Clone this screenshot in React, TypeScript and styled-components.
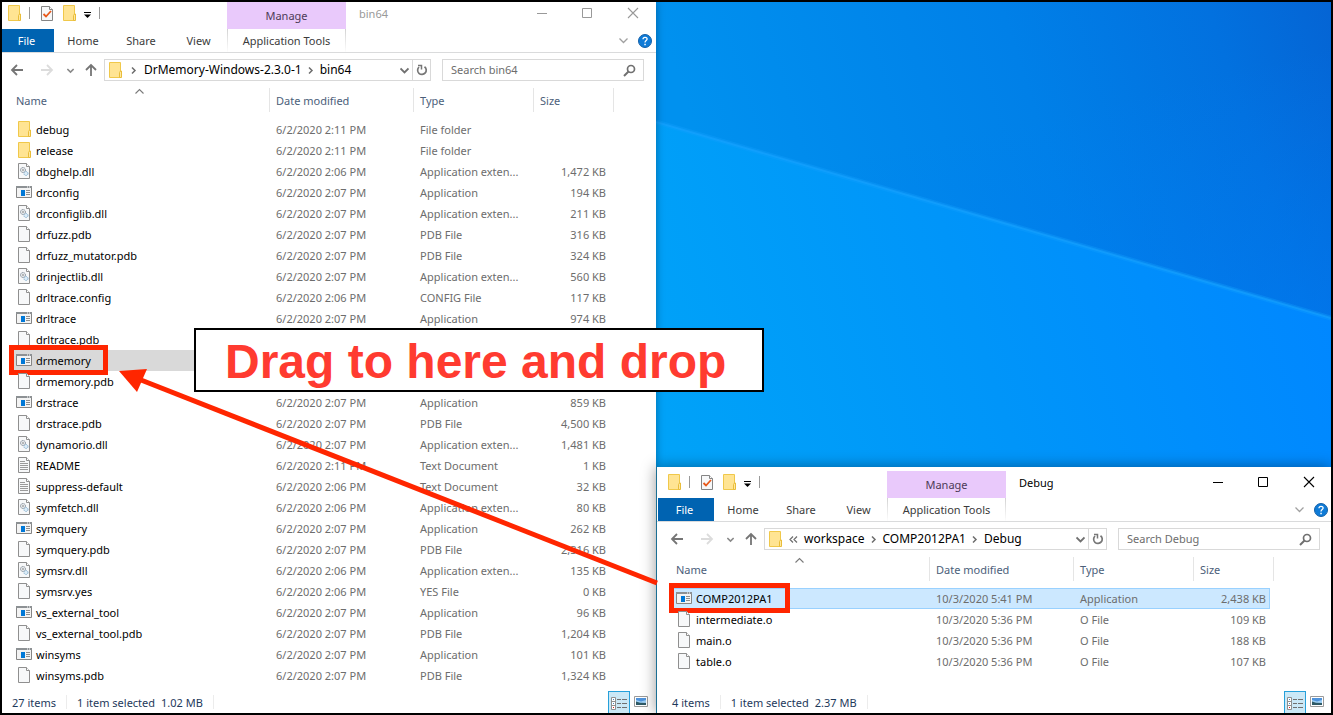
import React from "react";
import styled, { createGlobalStyle, css } from "styled-components";

const GlobalStyle = createGlobalStyle`
  *, *::before, *::after { box-sizing: border-box; }
  body {
    margin: 0;
    font-family: "Noto Sans", "Open Sans", sans-serif;
    font-size: 11px;
    line-height: 16px;
    color: #000;
  }
  button, input { font: inherit; }
  svg { display: block; flex: none; }
`;

/* ---------- desktop ---------- */

const Desktop = styled.main`
  position: relative;
  display: flex;
  min-height: 100vh;
  border: 2px solid #000;
  overflow: hidden;
`;

const RightSide = styled.div`
  display: flex;
  flex-direction: column;
  flex: 675 1 0;
  min-width: 0;
`;

const WallpaperArea = styled.div`
  position: relative;
  flex: 1;
  background: #0090f4;
  & > svg {
    position: absolute;
    inset: 0;
    width: 100%;
    height: 100%;
  }
`;

const Window = styled.section<{ $front?: boolean }>`
  position: relative;
  display: flex;
  flex-direction: column;
  min-width: 0;
  background: #fff;
  z-index: 1;
  box-shadow: 0 0 8px rgba(0, 0, 0, 0.35);
  ${(p) =>
    p.$front
      ? css`
          z-index: 2;
          border-left: 1px solid #1b6f94;
          box-shadow: 0 0 14px rgba(0, 0, 0, 0.4);
        `
      : css`
          flex: 654 1 0;
        `}
`;

/* ---------- ribbon ---------- */

const Ribbon = styled.header<{ $inset: number }>`
  display: grid;
  grid-template-columns: ${(p) => 225 + p.$inset}px 119px 1fr;
  grid-template-rows: 27px 23px;
  padding-top: ${(p) => (p.$inset ? 4 : 0)}px;
  border-bottom: 1px solid #dadbdc;
`;

const QuickAccess = styled.div<{ $inset: number }>`
  display: flex;
  gap: 6px;
  padding: 3px 0 0 ${(p) => 4 + p.$inset}px;
`;

const BareButton = styled.button`
  display: flex;
  align-items: center;
  justify-content: center;
  padding: 0;
  border: 0;
  background: none;
  color: inherit;
`;

const QuickButton = styled(BareButton)`
  height: 16px;
`;

const QuickDivider = styled.span`
  width: 1px;
  height: 12px;
  margin: 2px 3px 0 1px;
  background: #9a9a9a;
`;

const ContextTitle = styled.div`
  padding-top: 6px;
  background: #e9c9fb;
  color: #4d3b57;
  text-align: center;
`;

const TitleBar = styled.div<{ $active?: boolean }>`
  display: flex;
  justify-content: space-between;
  padding-left: 13px;
  color: ${(p) => (p.$active ? "#000" : "#999")};
`;

const TitleText = styled.h1`
  margin: 4px 0 0;
  font-size: 11px;
  font-weight: 400;
  line-height: 16px;
`;

const WindowButtons = styled.div<{ $trim: number }>`
  display: flex;
  margin-right: -${(p) => p.$trim}px;
`;

const WindowButton = styled(BareButton)`
  width: 46px;
  height: 22px;
`;

const TabRow = styled.nav<{ $inset: number }>`
  display: grid;
  grid-template-columns: ${(p) => (p.$inset ? 56 : 52)}px 58px 58px 57px;
  padding-left: ${(p) => (p.$inset ? 1 : 0)}px;
`;

const Tab = styled(BareButton)<{ $file?: boolean }>`
  color: #3b3b3b;
  ${(p) =>
    p.$file &&
    css`
      background: #0063b1;
      color: #fff;
      padding-right: 3px;
    `}
`;

const ContextTab = styled(BareButton)`
  align-self: start;
  height: 23px;
  border-style: solid;
  border-width: 0 1px;
  border-image: linear-gradient(#d0d0d0, #fff) 1;
  color: #3b3b3b;
`;

const RibbonEnd = styled.div<{ $trim: number }>`
  display: flex;
  align-items: center;
  justify-content: flex-end;
  gap: 10px;
  padding-right: ${(p) => 4 - p.$trim}px;
`;

const HelpButton = styled(BareButton)`
  width: 14px;
  height: 14px;
`;

/* ---------- navigation ---------- */

const NavBar = styled.div<{ $inset: number; $trim: number }>`
  display: flex;
  align-items: center;
  padding: 6px ${(p) => 12 - p.$trim}px 7px ${(p) => 7 + p.$inset}px;
`;

const NavButton = styled(BareButton)`
  width: 16px;
  height: 16px;
`;

const NavArrows = styled.div`
  display: flex;
  align-items: center;
  gap: 14px;
`;

const NavUp = styled.div`
  display: flex;
  align-items: center;
  gap: 8px;
  margin: 0 5px 0 11px;
`;

const RecentButton = styled(BareButton)`
  width: 9px;
  height: 16px;
`;

const AddressBar = styled.div`
  display: flex;
  flex: 1;
  align-items: center;
  height: 22px;
  min-width: 0;
  border: 1px solid #d9d9d9;
  padding-left: 2px;
`;

const Crumbs = styled.ol`
  display: flex;
  flex: 1;
  min-width: 0;
  margin: 0;
  padding: 0;
  list-style: none;
  font-size: 12px;
  white-space: nowrap;
`;

const Crumb = styled.li`
  display: flex;
  align-items: center;
`;

const CrumbGap = styled.span<{ $first?: boolean }>`
  display: flex;
  justify-content: center;
  width: ${(p) => (p.$first ? 21 : 18)}px;
`;

const AddressDrop = styled(BareButton)`
  width: 16px;
  height: 20px;
`;

const RefreshButton = styled(BareButton)`
  width: 18px;
  height: 20px;
  border-left: 1px solid #d9d9d9;
`;

const SearchBox = styled.label`
  display: flex;
  align-items: center;
  width: 202px;
  height: 22px;
  margin-left: 11px;
  padding: 0 7px 0 8px;
  border: 1px solid #d9d9d9;
`;

const SearchInput = styled.input`
  flex: 1;
  min-width: 0;
  padding: 0;
  border: 0;
  outline: 0;
  background: none;
  &::placeholder {
    color: #6d6d6d;
    opacity: 1;
  }
`;

/* ---------- file list ---------- */

const ListArea = styled.div<{ $inset: number }>`
  flex: 1;
  padding: 0 0 ${(p) => (p.$inset ? 19 : 5)}px ${(p) => 8 + p.$inset}px;
`;

const FileTable = styled.table`
  table-layout: fixed;
  width: 604px;
  border-collapse: separate;
  border-spacing: 0;
  white-space: nowrap;
`;

const Col = styled.col<{ $w: number }>`
  width: ${(p) => p.$w}px;
`;

const HeadCell = styled.th`
  padding: 0 0 7px;
  text-align: left;
  font-weight: 400;
  color: #4c607a;
`;

const HeadLabel = styled.div`
  position: relative;
  display: flex;
  align-items: center;
  height: 24px;
  padding: 2px 0 0 6px;
  border-right: 1px solid #e5e5e5;
`;

const SortMark = styled.span`
  position: absolute;
  top: 0;
  left: 50%;
  margin-left: -5px;
`;

const FileRow = styled.tr<{ $selected?: "active" | "inactive" }>`
  height: 21px;
  color: #6d6d6d;
  ${(p) =>
    p.$selected === "active" &&
    css`
      & > td:not(:last-child) {
        background: #cce8ff;
        box-shadow: inset 0 1px #99d1ff, inset 0 -1px #99d1ff;
      }
      & > td:nth-child(4) {
        box-shadow: inset 0 1px #99d1ff, inset -1px -1px #99d1ff;
      }
    `}
  ${(p) =>
    p.$selected === "inactive" &&
    css`
      & > td:not(:last-child) {
        background: #d9d9d9;
      }
    `}
`;

const Cell = styled.td<{ $right?: boolean }>`
  padding: 0 4px 0 6px;
  text-align: ${(p) => (p.$right ? "right" : "left")};
`;

const NameLabel = styled.span`
  position: relative;
  display: flex;
  align-items: center;
  gap: 4px;
  width: fit-content;
  height: 20px;
  margin-bottom: 1px;
  color: #000;
`;

const FileName = styled.span`
  padding-top: 2px;
`;

const Marker = styled.span`
  position: absolute;
  inset: -5px -17px -5px -7px;
  border: 5px solid #ff2600;
`;

/* ---------- status bar ---------- */

const StatusBar = styled.footer<{ $inset: number; $trim: number }>`
  display: flex;
  align-items: center;
  height: 22px;
  padding: 0 ${(p) => 4 - p.$trim}px 0 ${(p) => 10 + p.$inset}px;
  color: #1e395b;
`;

const StatusText = styled.span`
  display: flex;
  gap: 6px;
  padding-top: 2px;
`;

const StatusDivider = styled.span`
  width: 1px;
  height: 14px;
  margin: 0 10px;
  background: #ececec;
`;

const ViewButtons = styled.div`
  display: flex;
  margin-left: auto;
`;

const ViewButton = styled(BareButton)<{ $on?: boolean }>`
  width: 22px;
  height: 22px;
  ${(p) =>
    p.$on &&
    css`
      background: #cbe8f6;
      border: 1px solid #26a0da;
      border-bottom: 0;
    `}
`;

/* ---------- annotation ---------- */

const ArrowLayer = styled.svg`
  position: absolute;
  top: 0;
  left: 0;
  z-index: 3;
  pointer-events: none;
`;

const Callout = styled.p`
  position: absolute;
  top: 326px;
  left: 192px;
  z-index: 4;
  width: 570px;
  margin: 0;
  padding: 6px 0 2px 29px;
  border: 2px solid #000;
  background: #fff;
  color: #ff3b30;
  font-family: "Liberation Sans", Arial, sans-serif;
  font-size: 48px;
  font-weight: 700;
  line-height: 52px;
  white-space: nowrap;
`;

/* ---------- icons ---------- */

const FolderIcon = () => (
  <svg width="16" height="16" viewBox="0 0 16 16" aria-hidden="true">
    <path d="M2.5.5h11v15h-11z" fill="#ffe493" stroke="#f0c84a" />
    <path d="M12.500 10.500l1-1.500h1v6.500h-2z" fill="#ffe89f" stroke="#e9bd3a" />
  </svg>
);

const Sheet = () => (
  <>
    <path d="M2.5.5h8l3 3v12h-11z" fill="#f7f8f9" stroke="#8f8f8f" />
    <path d="M10.5.5v3h3" fill="#fff" stroke="#8f8f8f" />
  </>
);

const PageIcon = () => (
  <svg width="16" height="16" viewBox="0 0 16 16" aria-hidden="true">
    <Sheet />
  </svg>
);

const TextIcon = () => (
  <svg width="16" height="16" viewBox="0 0 16 16" aria-hidden="true">
    <Sheet />
    <path d="M4 4.5h5M4 6.5h8M4 8.5h8M4 10.5h8M4 12.5h8" stroke="#9a9a9a" />
  </svg>
);

const LibraryIcon = () => (
  <svg width="16" height="16" viewBox="0 0 16 16" aria-hidden="true">
    <Sheet />
    <circle cx="7" cy="7" r="2.5" fill="#e6e9ec" stroke="#87909a" strokeDasharray="1.4 .6" />
    <circle cx="7" cy="7" r=".8" fill="#777" />
    <circle cx="10" cy="10.5" r="2" fill="#dcecf7" stroke="#86b0cf" strokeDasharray="1.4 .6" />
  </svg>
);

const AppIcon = () => (
  <svg width="16" height="16" viewBox="0 0 16 16" aria-hidden="true">
    <path d="M.5 2.5h15v11H.5z" fill="#f3f3f3" stroke="#858585" />
    <path d="M0 2h16v2H0z" fill="#8d9194" />
    <path d="M11 3h1M13 3h1" stroke="#fff" />
    <path d="M5 6h4v6H5z" fill="#0078d7" />
    <path d="M10 6.5h4M10 8.5h4M10 10.5h4" stroke="#8f8f8f" />
  </svg>
);

const CheckPageIcon = () => (
  <svg width="16" height="16" viewBox="0 0 16 16" aria-hidden="true">
    <path d="M2.5 1.5h8l3 3v11h-11z" fill="#f7f8f9" stroke="#858585" />
    <path d="M10.5 1.5v3h3" fill="#fff" stroke="#858585" />
    <path d="M4.5 9l2.5 2.5L12 6" fill="none" stroke="#e8591a" strokeWidth="1.8" />
  </svg>
);

const CustomizeIcon = () => (
  <svg width="9" height="16" viewBox="0 0 9 16" aria-hidden="true">
    <path d="M1 7.5h7" stroke="#000" />
    <path d="M1 9.5h7L4.500 13z" fill="#000" />
  </svg>
);

const MinimizeIcon = () => (
  <svg width="12" height="12" viewBox="0 0 12 12" aria-hidden="true">
    <path d="M2 6.5h10" stroke="currentColor" />
  </svg>
);

const MaximizeIcon = () => (
  <svg width="12" height="12" viewBox="0 0 12 12" aria-hidden="true">
    <path d="M1.5 1.5h9v9h-9z" fill="none" stroke="currentColor" />
  </svg>
);

const CloseIcon = () => (
  <svg width="12" height="12" viewBox="0 0 12 12" aria-hidden="true">
    <path d="M1 1l10 10M11 1L1 11" stroke="currentColor" strokeWidth="1.1" />
  </svg>
);

const Chevron = ({ size = 9, color = "#8a8a8a", weight = 1.5, up = false }) => (
  <svg width={size} height={size} viewBox="0 0 9 9" fill="none" aria-hidden="true">
    <path d={up ? "M.5 5.5l4-4 4 4" : "M.5 2.5l4 4 4-4"} stroke={color} strokeWidth={weight} />
  </svg>
);

const RightChevron = ({ twice = false }) => (
  <svg width="9" height="16" viewBox="0 0 9 16" fill="none" aria-hidden="true">
    {twice ? (
      <path d="M4 5.5L1 8.5l3 3M8 5.5l-3 3 3 3" stroke="#6d6d6d" strokeWidth="1.2" />
    ) : (
      <path d="M3 5.5l3 3-3 3" stroke="#6d6d6d" strokeWidth="1.5" />
    )}
  </svg>
);

const ArrowIcon = ({ kind }: { kind: "back" | "forward" | "up" }) => {
  const shape = {
    back: "M14 8H3M8 3L3 8l5 5",
    forward: "M2 8h11M8 3l5 5-5 5",
    up: "M8 14V3M3 8l5-5 5 5",
  }[kind];
  return (
    <svg width="16" height="16" viewBox="0 0 16 16" fill="none" aria-hidden="true">
      <path d={shape} stroke={kind === "forward" ? "#dcdcdc" : "#757575"} strokeWidth="1.8" />
    </svg>
  );
};

const RefreshIcon = () => (
  <svg width="12" height="12" viewBox="0 0 12 12" fill="none" aria-hidden="true">
    <path d="M8.500 2.700A4.300 4.300 0 1 1 3 3" stroke="#777" strokeWidth="1.700" />
    <path d="M2 1.500h3.500v4" stroke="#777" strokeWidth="1.500" />
  </svg>
);

const SearchIcon = () => (
  <svg width="13" height="13" viewBox="0 0 13 13" fill="none" aria-hidden="true">
    <circle cx="8" cy="5" r="3.500" stroke="#707070" strokeWidth="1.700" />
    <path d="M5.500 7.500L1 12" stroke="#707070" strokeWidth="2" />
  </svg>
);

const HelpIcon = () => (
  <svg width="14" height="14" viewBox="0 0 14 14" fill="none" aria-hidden="true">
    <circle cx="7" cy="7" r="6.500" fill="#0f7bd7" stroke="#1460a8" />
    <path d="M5 5.300c0-2.600 4.100-2.500 4.100-.2C9.100 6.600 7 6.600 7 8.500" stroke="#fff" strokeWidth="1.300" />
    <path d="M6.300 9.800h1.500v1.500H6.300z" fill="#fff" />
  </svg>
);

const DetailsIcon = () => (
  <svg width="18" height="14" viewBox="0 0 18 14" fill="none" aria-hidden="true">
    <path d="M1.500 1.500h4v12h-4zM1.500 5.500h4M1.500 9.500h4" fill="#fff" stroke="#8f8f8f" />
    <path d="M3 3.500h1M3 7.500h1" stroke="#4a8ac0" />
    <path d="M3 11.500h1" stroke="#e02020" />
    <path
      d="M7 3.500h4M12 3.500h5M7 7.500h4M12 7.500h5M7 11.500h4M12 11.500h5"
      stroke="#707070"
    />
  </svg>
);

const PictureIcon = () => (
  <svg width="14" height="12" viewBox="0 0 14 12" fill="none" aria-hidden="true">
    <path d="M.5.5h13v10H.5z" fill="#fff" stroke="#9a9a9a" />
    <path d="M2 2h10v7H2z" fill="#9fd0f5" />
    <path d="M2 2h10v2L7 5.500 2 4z" fill="#4f93dc" />
    <path d="M2 5.500l4 1.200 6 .3v2H2z" fill="#2f5a66" />
  </svg>
);

const Wallpaper = () => (
  <svg viewBox="0 0 675 465" preserveAspectRatio="none" aria-hidden="true">
    <defs>
      <linearGradient id="sky" gradientUnits="userSpaceOnUse" x1="60" y1="200" x2="690" y2="0">
        <stop offset="0" stopColor="#0091ef" />
        <stop offset=".5" stopColor="#0080e8" />
        <stop offset=".8" stopColor="#0271df" />
        <stop offset="1" stopColor="#0563d3" />
      </linearGradient>
      <linearGradient id="glow" gradientUnits="userSpaceOnUse" x1="0" y1="465" x2="660" y2="250">
        <stop offset="0" stopColor="#00a3f8" />
        <stop offset=".5" stopColor="#0095f9" />
        <stop offset="1" stopColor="#0087ff" />
      </linearGradient>
      <linearGradient id="lift" gradientUnits="userSpaceOnUse" x1="600" y1="60" x2="660" y2="320">
        <stop offset="0" stopColor="#007cf6" stopOpacity="0" />
        <stop offset="1" stopColor="#007cf6" stopOpacity=".8" />
      </linearGradient>
    </defs>
    <path d="M0 0h675v465H0z" fill="url(#sky)" />
    <path d="M0 0h675v316L0 120z" fill="url(#lift)" opacity=".6" />
    <path d="M0 120l675 196v149H0z" fill="url(#glow)" />
    <path d="M0 120l675 196" stroke="#12a0ff" strokeWidth="5" opacity=".35" />
    <path d="M0 120l675 196" stroke="#17a2ff" strokeWidth="2" opacity=".6" />
  </svg>
);

/* ---------- data ---------- */

type Kind = "folder" | "dll" | "app" | "page" | "text";
type FileEntry = [kind: Kind, name: string, date?: string, type?: string, size?: string];

const icons: Record<Kind, () => React.JSX.Element> = {
  folder: FolderIcon,
  dll: LibraryIcon,
  app: AppIcon,
  page: PageIcon,
  text: TextIcon,
};

const memoryFiles: FileEntry[] = [
  ["folder", "debug", "6/2/2020 2:11 PM", "File folder"],
  ["folder", "release", "6/2/2020 2:11 PM", "File folder"],
  ["dll", "dbghelp.dll", "6/2/2020 2:06 PM", "Application exten...", "1,472 KB"],
  ["app", "drconfig", "6/2/2020 2:07 PM", "Application", "194 KB"],
  ["dll", "drconfiglib.dll", "6/2/2020 2:07 PM", "Application exten...", "211 KB"],
  ["page", "drfuzz.pdb", "6/2/2020 2:07 PM", "PDB File", "316 KB"],
  ["page", "drfuzz_mutator.pdb", "6/2/2020 2:07 PM", "PDB File", "324 KB"],
  ["dll", "drinjectlib.dll", "6/2/2020 2:07 PM", "Application exten...", "560 KB"],
  ["page", "drltrace.config", "6/2/2020 2:06 PM", "CONFIG File", "117 KB"],
  ["app", "drltrace", "6/2/2020 2:07 PM", "Application", "974 KB"],
  ["page", "drltrace.pdb"],
  ["app", "drmemory"],
  ["page", "drmemory.pdb"],
  ["app", "drstrace", "6/2/2020 2:07 PM", "Application", "859 KB"],
  ["page", "drstrace.pdb", "6/2/2020 2:07 PM", "PDB File", "4,500 KB"],
  ["dll", "dynamorio.dll", "6/2/2020 2:07 PM", "Application exten...", "1,481 KB"],
  ["text", "README", "6/2/2020 2:11 PM", "Text Document", "1 KB"],
  ["text", "suppress-default", "6/2/2020 2:06 PM", "Text Document", "32 KB"],
  ["dll", "symfetch.dll", "6/2/2020 2:06 PM", "Application exten...", "80 KB"],
  ["app", "symquery", "6/2/2020 2:07 PM", "Application", "262 KB"],
  ["page", "symquery.pdb", "6/2/2020 2:07 PM", "PDB File", "2,316 KB"],
  ["dll", "symsrv.dll", "6/2/2020 2:06 PM", "Application exten...", "135 KB"],
  ["page", "symsrv.yes", "6/2/2020 2:06 PM", "YES File", "0 KB"],
  ["app", "vs_external_tool", "6/2/2020 2:07 PM", "Application", "96 KB"],
  ["page", "vs_external_tool.pdb", "6/2/2020 2:07 PM", "PDB File", "1,204 KB"],
  ["app", "winsyms", "6/2/2020 2:07 PM", "Application", "101 KB"],
  ["page", "winsyms.pdb", "6/2/2020 2:07 PM", "PDB File", "1,324 KB"],
];

const debugFiles: FileEntry[] = [
  ["app", "COMP2012PA1", "10/3/2020 5:41 PM", "Application", "2,438 KB"],
  ["page", "intermediate.o", "10/3/2020 5:36 PM", "O File", "109 KB"],
  ["page", "main.o", "10/3/2020 5:36 PM", "O File", "188 KB"],
  ["page", "table.o", "10/3/2020 5:36 PM", "O File", "107 KB"],
];

/* ---------- explorer window ---------- */

interface ExplorerProps {
  title: string;
  path: string[];
  collapsed?: boolean;
  front?: boolean;
  files: FileEntry[];
  selected: string;
  count: string;
  size: string;
}

const Explorer = ({ title, path, collapsed, front, files, selected, count, size }: ExplorerProps) => {
  const inset = front ? 5 : 0;
  const trim = front ? 1 : 0;
  return (
    <Window $front={front} aria-label={title}>
      <Ribbon $inset={inset}>
        <QuickAccess $inset={inset}>
          <FolderIcon />
          <QuickDivider />
          <QuickButton aria-label="Properties"><CheckPageIcon /></QuickButton>
          <QuickButton aria-label="New folder"><FolderIcon /></QuickButton>
          <QuickButton aria-label="Customize toolbar"><CustomizeIcon /></QuickButton>
          <QuickDivider />
        </QuickAccess>
        <ContextTitle>Manage</ContextTitle>
        <TitleBar $active={front}>
          <TitleText>{title}</TitleText>
          <WindowButtons $trim={trim}>
            <WindowButton aria-label="Minimize"><MinimizeIcon /></WindowButton>
            <WindowButton aria-label="Maximize"><MaximizeIcon /></WindowButton>
            <WindowButton aria-label="Close"><CloseIcon /></WindowButton>
          </WindowButtons>
        </TitleBar>
        <TabRow $inset={inset}>
          <Tab $file>File</Tab>
          <Tab>Home</Tab>
          <Tab>Share</Tab>
          <Tab>View</Tab>
        </TabRow>
        <ContextTab>Application Tools</ContextTab>
        <RibbonEnd $trim={trim}>
          <BareButton aria-label="Expand ribbon"><Chevron color="#a0a0a0" weight={1.3} /></BareButton>
          <HelpButton aria-label="Help"><HelpIcon /></HelpButton>
        </RibbonEnd>
      </Ribbon>

      <NavBar $inset={inset} $trim={trim}>
        <NavArrows>
          <NavButton aria-label="Back"><ArrowIcon kind="back" /></NavButton>
          <NavButton aria-label="Forward"><ArrowIcon kind="forward" /></NavButton>
        </NavArrows>
        <NavUp>
          <RecentButton aria-label="Recent locations"><Chevron size={7} weight={2} /></RecentButton>
          <NavButton aria-label="Up"><ArrowIcon kind="up" /></NavButton>
        </NavUp>
        <AddressBar>
          <FolderIcon />
          <Crumbs>
            {path.map((part, i) => (
              <Crumb key={part}>
                <CrumbGap $first={i === 0}><RightChevron twice={i === 0 && collapsed} /></CrumbGap>
                {part}
              </Crumb>
            ))}
          </Crumbs>
          <AddressDrop aria-label="Previous locations"><Chevron color="#707070" weight={1.8} /></AddressDrop>
          <RefreshButton aria-label="Refresh"><RefreshIcon /></RefreshButton>
        </AddressBar>
        <SearchBox>
          <SearchInput aria-label={`Search ${title}`} placeholder={`Search ${title}`} />
          <SearchIcon />
        </SearchBox>
      </NavBar>

      <ListArea $inset={inset}>
        <FileTable>
          <colgroup>
            <Col $w={260} />
            <Col $w={144} />
            <Col $w={120} />
            <Col $w={76} />
            <Col $w={4} />
          </colgroup>
          <thead>
            <tr>
              <HeadCell>
                <HeadLabel>
                  Name
                  <SortMark><Chevron up color="#7a7a7a" weight={1.1} /></SortMark>
                </HeadLabel>
              </HeadCell>
              <HeadCell><HeadLabel>Date modified</HeadLabel></HeadCell>
              <HeadCell><HeadLabel>Type</HeadLabel></HeadCell>
              <HeadCell colSpan={2}><HeadLabel>Size</HeadLabel></HeadCell>
            </tr>
          </thead>
          <tbody>
            {files.map(([kind, name, date, type, fileSize]) => {
              const Icon = icons[kind];
              const isSelected = name === selected;
              return (
                <FileRow key={name} $selected={isSelected ? (front ? "active" : "inactive") : undefined}>
                  <Cell>
                    <NameLabel>
                      <Icon />
                      <FileName>{name}</FileName>
                      {isSelected && <Marker />}
                    </NameLabel>
                  </Cell>
                  <Cell>{date}</Cell>
                  <Cell>{type}</Cell>
                  <Cell $right>{fileSize}</Cell>
                  <td />
                </FileRow>
              );
            })}
          </tbody>
        </FileTable>
      </ListArea>

      <StatusBar $inset={inset} $trim={trim}>
        <StatusText>{count}</StatusText>
        <StatusDivider />
        <StatusText>
          <span>1 item selected</span>
          <span>{size}</span>
        </StatusText>
        <StatusDivider />
        <ViewButtons>
          <ViewButton $on aria-label="Details view"><DetailsIcon /></ViewButton>
          <ViewButton aria-label="Thumbnail view"><PictureIcon /></ViewButton>
        </ViewButtons>
      </StatusBar>
    </Window>
  );
};

export default function App() {
  return (
    <>
      <GlobalStyle />
      <Desktop>
        <Explorer
          title="bin64"
          path={["DrMemory-Windows-2.3.0-1", "bin64"]}
          files={memoryFiles}
          selected="drmemory"
          count="27 items"
          size="1.02 MB"
        />
        <RightSide>
          <WallpaperArea>
            <Wallpaper />
          </WallpaperArea>
          <Explorer
            front
            collapsed
            title="Debug"
            path={["workspace", "COMP2012PA1", "Debug"]}
            files={debugFiles}
            selected="COMP2012PA1"
            count="4 items"
            size="2.37 MB"
          />
        </RightSide>
        <ArrowLayer width="660" height="600" viewBox="0 0 660 600" aria-hidden="true">
          <path d="M655 581L139 378" stroke="#ff2600" strokeWidth="5" />
          <path d="M117 369l28-2-10 23z" fill="#ff2600" />
        </ArrowLayer>
        <Callout>Drag to here and drop</Callout>
      </Desktop>
    </>
  );
}
